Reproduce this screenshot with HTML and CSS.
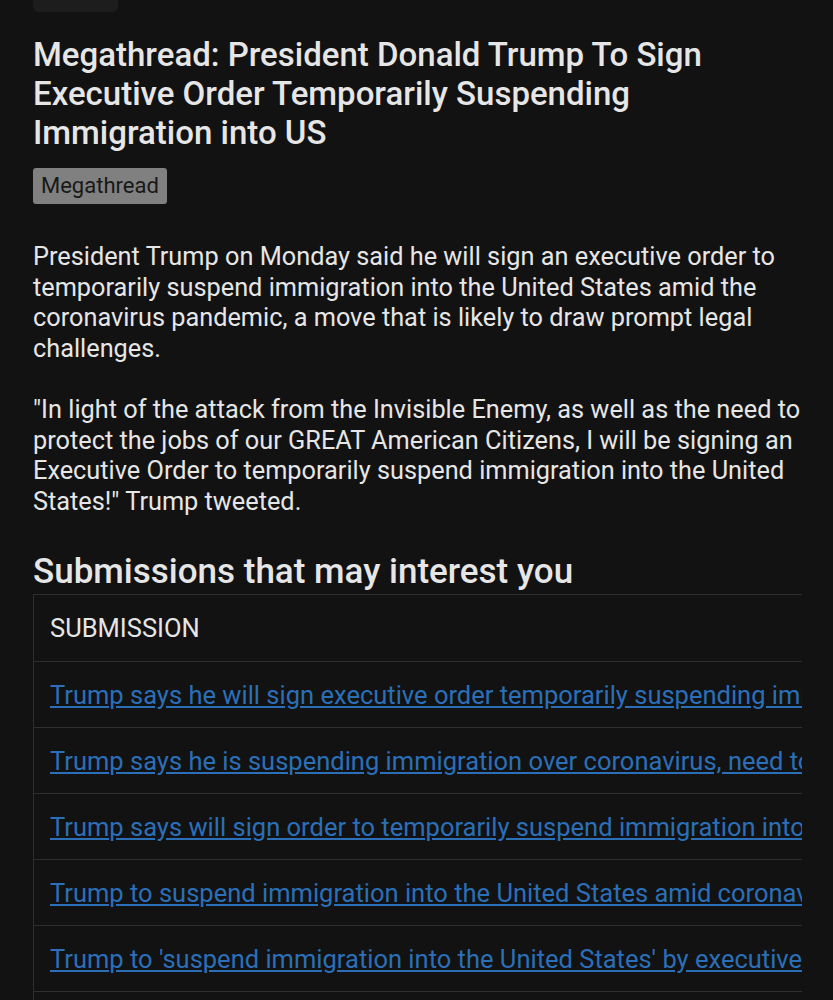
FILE: index.html
```html
<!DOCTYPE html>
<html lang="en">
<head>
  <meta charset="UTF-8" />
  <title>Megathread</title>
  <link rel="stylesheet" href="styles.css">
</head>
<body>

  <div class="top-button"></div>

  <div class="post">
    <h1>Megathread: President Donald Trump To Sign Executive Order Temporarily Suspending Immigration into US</h1>

    <span class="flair">Megathread</span>

    <p>President Trump on Monday said he will sign an executive order to temporarily suspend immigration into the United States amid the coronavirus pandemic, a move that is likely to draw prompt legal challenges.</p>

    <p>"In light of the attack from the Invisible Enemy, as well as the need to protect the jobs of our GREAT American Citizens, I will be signing an Executive Order to temporarily suspend immigration into the United States!" Trump tweeted.</p>

    <h2>Submissions that may interest you</h2>

    <div class="table-wrap">
      <table>
        <thead>
          <tr><th>SUBMISSION</th></tr>
        </thead>
        <tbody>
          <tr><td><a href="#">Trump says he will sign executive order temporarily suspending immigration into US</a></td></tr>
          <tr><td><a href="#">Trump says he is suspending immigration over coronavirus, need to protect jobs</a></td></tr>
          <tr><td><a href="#">Trump says will sign order to temporarily suspend immigration into United States</a></td></tr>
          <tr><td><a href="#">Trump to suspend immigration into the United States amid coronavirus outbreak</a></td></tr>
          <tr><td><a href="#">Trump to 'suspend immigration into the United States' by executive order</a></td></tr>
          <tr><td><a href="#">Trump announces plan to halt immigration into the United States</a></td></tr>
        </tbody>
      </table>
    </div>
  </div>

</body>
</html>
```

FILE: styles.css
```css
body {
  font-family: Roboto, 'Noto Sans', sans-serif;
  background-color: #121212;
  color: #e6e6e6;
  margin: 0;
  padding: 0 32px 0 33px;
}

.top-button {
  width: 85px;
  height: 12px;
  background: #1d1d1d;
  border-radius: 0 0 6px 6px;
}

h1 {
  font-size: 33px;
  font-weight: 500;
  line-height: 39px;
  margin: 23px 0 0;
  color: #e6e6e6;
}

.flair {
  display: block;
  width: fit-content;
  margin-top: 16px;
  background: #808080;
  color: #181818;
  font-size: 22px;
  line-height: 36px;
  padding: 0 8px;
  border-radius: 3px;
}

p {
  font-size: 25.3px;
  line-height: 30.5px;
  margin: 38px 0 0;
}

p + p {
  margin-top: 31px;
}

h2 {
  font-size: 35px;
  font-weight: 500;
  line-height: 40px;
  margin: 35px 0 0;
  color: #e6e6e6;
}

.table-wrap {
  overflow: hidden;
  border: 1px solid #2e2e2e;
  border-right: none;
  margin-top: 2px;
  width: 768px;
}

table {
  border-collapse: collapse;
  white-space: nowrap;
}

th {
  text-align: left;
  font-weight: 400;
  font-size: 25.5px;
  color: #e6e6e6;
  padding: 0 16px;
  height: 66px;
  border-bottom: 1px solid #2e2e2e;
}

td {
  font-size: 25.5px;
  padding: 0 16px;
  height: 65px;
  border-bottom: 1px solid #2e2e2e;
}

a {
  color: #2b6fb8;
}
```
